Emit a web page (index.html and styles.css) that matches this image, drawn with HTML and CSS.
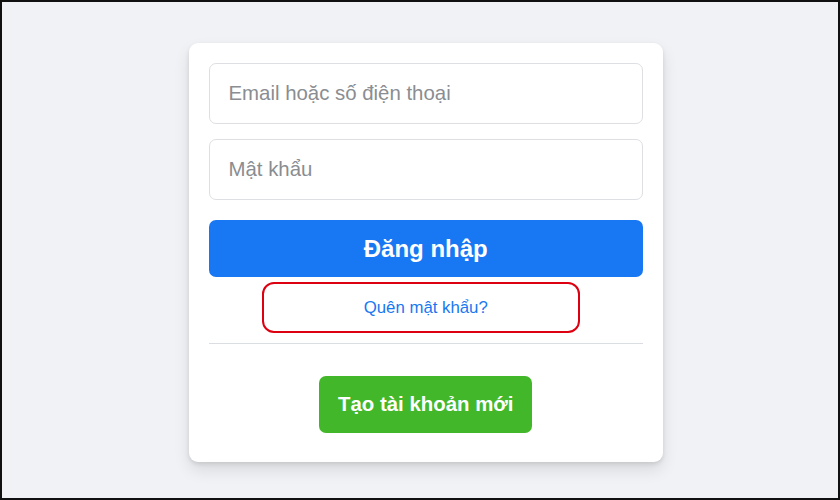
FILE: index.html
```html
<!DOCTYPE html>
<html lang="vi">
<head>
    <meta charset="UTF-8">
    <meta name="viewport" content="width=device-width, initial-scale=1.0">
    <title>Đăng nhập</title>
    <link rel="stylesheet" href="styles.css">
</head>
<body>

    <div class="khung">
        <div class="the-dang-nhap">
            <form onsubmit="event.preventDefault()">
                <input type="text" class="o-nhap" placeholder="Email hoặc số điện thoại">
                <input type="password" class="o-nhap" placeholder="Mật khẩu">
                <button type="submit" class="nut-dang-nhap">Đăng nhập</button>
            </form>

            <div class="quen-mat-khau">
                <a href="#">Quên mật khẩu?</a>
                <span class="khoanh-do"></span>
            </div>

            <div class="duong-ke"></div>

            <div class="tao-tai-khoan">
                <button type="button" class="nut-tao">Tạo tài khoản mới</button>
            </div>
        </div>
    </div>

</body>
</html>
```

FILE: styles.css
```css
body {
    margin: 0;
    font-family: "Liberation Sans", Arial, sans-serif;
    background-color: #f0f2f5;
}

.khung {
    box-sizing: border-box;
    height: 500px;
    border: 2px solid #111;
    background-color: #f0f2f5;
    overflow: hidden;
}

.the-dang-nhap {
    box-sizing: border-box;
    width: 474.5px;
    margin: 41px 0 0 186.5px;
    padding: 19.5px 20px 29.5px 20px;
    background-color: #fff;
    border-radius: 9px;
    box-shadow: 0 2px 4px rgba(0, 0, 0, 0.1), 0 8px 16px rgba(0, 0, 0, 0.1);
}

form {
    display: flex;
    flex-direction: column;
    gap: 15.5px;
}

.o-nhap {
    box-sizing: border-box;
    height: 61px;
    width: 100%;
    padding: 0 19px;
    border: 1px solid #dddfe2;
    border-radius: 7px;
    font-family: inherit;
    font-size: 20.4px;
    color: #1c1e21;
    outline: none;
}

.o-nhap::placeholder {
    color: #8a8d91;
}

.nut-dang-nhap {
    height: 57px;
    margin-top: 4.5px;
    border: none;
    border-radius: 7px;
    background-color: #1877f2;
    color: #fff;
    font-family: inherit;
    font-size: 24px;
    font-weight: bold;
    cursor: pointer;
}

.quen-mat-khau {
    position: relative;
    margin-top: 5px;
    height: 51px;
    line-height: 51px;
    text-align: center;
}

.quen-mat-khau a {
    color: #1877f2;
    font-size: 16.8px;
    text-decoration: none;
}

.khoanh-do {
    position: absolute;
    left: 53px;
    top: 0;
    box-sizing: border-box;
    width: 318px;
    height: 51px;
    border: 2px solid #dd0010;
    border-radius: 12px;
}

.duong-ke {
    height: 1px;
    margin-top: 10px;
    background-color: #dadde1;
}

.tao-tai-khoan {
    display: flex;
    justify-content: center;
    margin-top: 32px;
}

.nut-tao {
    height: 56.5px;
    padding: 0 19px;
    border: none;
    border-radius: 7px;
    background-color: #42b72a;
    color: #fff;
    font-family: inherit;
    font-size: 20.4px;
    font-weight: bold;
    cursor: pointer;
}
```
